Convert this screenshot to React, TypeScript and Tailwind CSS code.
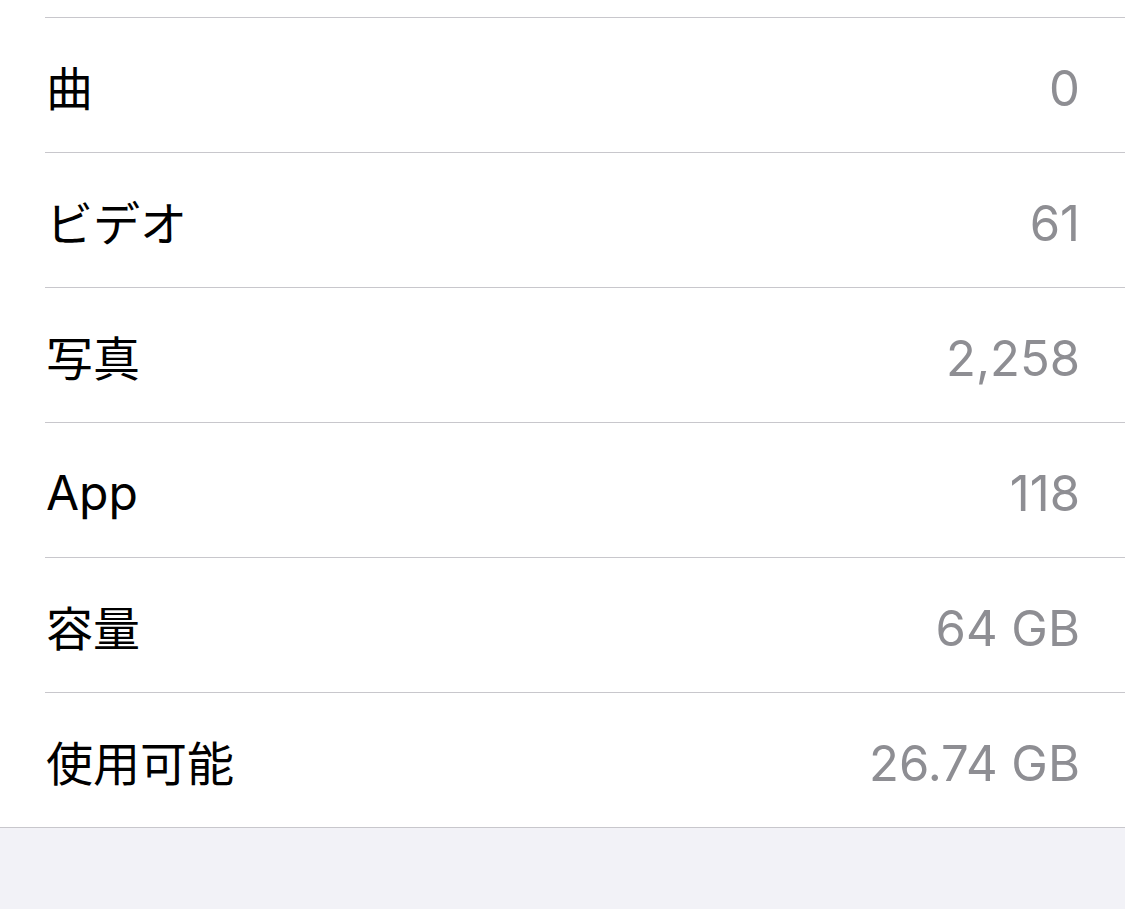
const rows: { label: string; value: string; latin?: boolean }[] = [
  { label: "曲", value: "0" },
  { label: "ビデオ", value: "61" },
  { label: "写真", value: "2,258" },
  { label: "App", value: "118", latin: true },
  { label: "容量", value: "64 GB" },
  { label: "使用可能", value: "26.74 GB" },
];

export default function App() {
  return (
    <div
      className="w-[1125px] h-[909px] bg-[#f2f2f7] flex flex-col overflow-hidden"
      style={{ fontFamily: 'Inter, "Noto Sans CJK JP", sans-serif' }}
    >
      <div className="bg-white pt-[17px] border-b border-[#c8c7cc]">
        {rows.map((row) => (
          <div key={row.label} className="pl-[45px]">
            <div className="h-[135px] border-t border-[#c8c7cc] flex items-center justify-between pl-px pr-[45px] pt-[6px]">
              <span
                className={`leading-none text-black ${row.latin ? "text-[48px]" : "text-[47px]"}`}
              >
                {row.label}
              </span>
              <span className="text-[49px] leading-none text-[#8e8e93]">{row.value}</span>
            </div>
          </div>
        ))}
      </div>
    </div>
  );
}
